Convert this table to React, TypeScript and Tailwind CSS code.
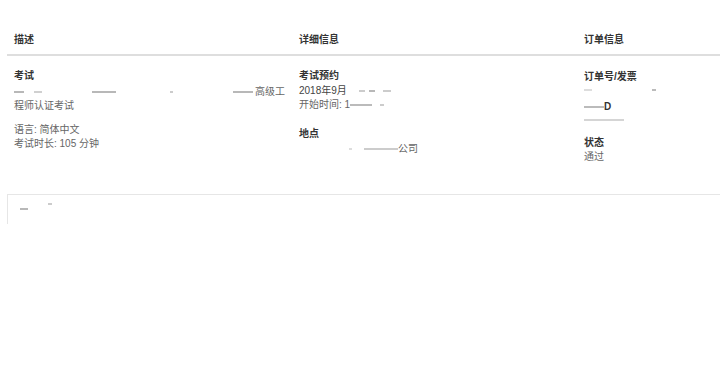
import React from "react";

const F = { fontFamily: '"Liberation Sans", "Noto Sans CJK SC", sans-serif' };

function Faint({ w, className = "" }: { w: number; className?: string }) {
  return <span className={"inline-block h-[2px] bg-[#b8b8b8] align-middle " + className} style={{ width: w }} />;
}

export default function App() {
  return (
    <div className="w-[720px] h-[367px] overflow-hidden bg-white text-[10px] leading-[14px]" style={F}>
      <div className="pl-[7px] w-[870px]">
        {/* header */}
        <div className="grid grid-cols-[285px_285px_285px] pt-[33px] pb-[7px] border-b-[2px] border-[#dedede] font-bold text-[#333]">
          <div className="px-[7px]">描述</div>
          <div className="px-[7px]">详细信息</div>
          <div className="px-[7px]">订单信息</div>
        </div>
        {/* body */}
        <div className="grid grid-cols-[285px_285px_285px] h-[138px] text-[#666]">
          <div className="px-[7px] pt-[13px]">
            <div className="font-bold text-[#333] h-[14px]">考试</div>
            <div className="mt-[2px] h-[14px] flex items-center">
              <Faint w={10} />
              <span className="w-[10px]" />
              <Faint w={8} className="bg-[#d0d0d0]" />
              <span className="w-[50px]" />
              <Faint w={24} className="bg-[#999]" />
              <span className="w-[54px]" />
              <Faint w={3} className="bg-[#ccc]" />
              <span className="w-[60px]" />
              <Faint w={20} className="bg-[#aaa]" />
              <span className="ml-[2px]">高级工</span>
            </div>
            <div className="h-[14px]">程师认证考试</div>
            <div className="mt-[10px] h-[14px]">语言: 简体中文</div>
            <div className="h-[14px]">考试时长: 105 分钟</div>
          </div>
          <div className="px-[7px] pt-[13px]">
            <div className="font-bold text-[#333] h-[14px]">考试预约</div>
            <div className="mt-[1px] h-[14px] text-[#444] flex items-center">
              <span>2018年9月</span>
              <span className="w-[12px]" />
              <Faint w={6} className="bg-[#ccc]" />
              <span className="w-[4px]" />
              <Faint w={6} className="bg-[#aaa]" />
              <span className="w-[8px]" />
              <Faint w={8} className="bg-[#ccc]" />
            </div>
            <div className="h-[14px] flex items-center">
              <span>开始时间: 1</span>
              <Faint w={22} className="bg-[#bbb]" />
              <span className="w-[8px]" />
              <Faint w={4} className="bg-[#ccc]" />
            </div>
            <div className="mt-[15px] font-bold text-[#333] h-[14px]">地点</div>
            <div className="mt-[1px] h-[14px] flex items-center">
              <span className="w-[50px]" />
              <Faint w={3} className="bg-[#ddd]" />
              <span className="w-[12px]" />
              <Faint w={34} className="bg-[#ccc]" />
              <span>公司</span>
            </div>
          </div>
          <div className="px-[7px] pt-[14px]">
            <div className="font-bold text-[#333] h-[14px]">订单号/发票</div>
            <div className="h-[14px] mt-[-1px] flex items-center">
              <Faint w={8} className="bg-[#ddd]" />
              <span className="w-[60px]" />
              <Faint w={4} className="bg-[#bbb]" />
            </div>
            <div className="h-[14px] mt-[3px] flex items-center text-[#444]">
              <Faint w={20} className="bg-[#bbb]" />
              <span className="font-bold text-[#333]">D</span>
            </div>
            <div className="h-[14px] mt-[-1px] flex items-center">
              <Faint w={40} className="bg-[#d5d5d5]" />
            </div>
            <div className="mt-[9px] font-bold text-[#333] h-[14px]">状态</div>
            <div className="h-[14px]">通过</div>
          </div>
        </div>
        {/* bottom box */}
        <div className="h-[30px] border-t border-l border-[#e6e6e6] relative">
          <div className="pt-[13px] pl-[12px] flex items-center gap-[20px]">
            <Faint w={8} className="bg-[#999]" />
            <Faint w={4} className="bg-[#ccc] mt-[-10px]" />
          </div>
        </div>
      </div>
    </div>
  );
}
